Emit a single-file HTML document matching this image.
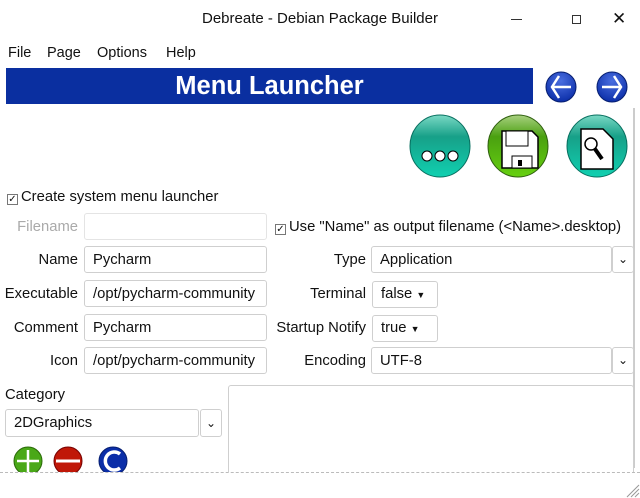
<!DOCTYPE html>
<html><head><style>
*{box-sizing:border-box;margin:0;padding:0}
body{width:640px;height:498px;background:#fff;font-family:"Liberation Sans","DejaVu Sans",sans-serif;font-size:14.8px;color:#111;position:relative;overflow:hidden}
.a{position:absolute;white-space:nowrap}
.in{position:absolute;border:1px solid #cfcfcf;border-radius:3px;background:#fff;padding-left:8px;line-height:26px;overflow:hidden}
.btn{position:absolute;border:1px solid #cfcfcf;border-radius:3px;background:#fff}
.lbl{position:absolute;text-align:right;white-space:nowrap}
.dd{position:absolute;border:1px solid #cfcfcf;border-radius:3px;background:#fff;padding-left:8px;line-height:25px}
.cb{display:inline-block;width:11px;height:11px;border:1px solid #777;vertical-align:-1px;margin-right:3px;font-size:10px;line-height:9px;text-align:center}
</style></head><body>
<div class="a" style="left:0;top:10px;width:640px;text-align:center;font-size:15px">Debreate - Debian Package Builder</div>
<div class="a" style="left:511px;top:19px;width:11px;height:1px;background:#333"></div>
<div class="a" style="left:572px;top:15px;width:9px;height:9px;border:1px solid #333"></div>
<div class="a" style="left:612px;top:9px;font-size:17px">✕</div>
<div class="a" style="left:8px;top:45px;font-size:14.5px">File</div>
<div class="a" style="left:47px;top:45px;font-size:14.5px">Page</div>
<div class="a" style="left:97px;top:45px;font-size:14.5px">Options</div>
<div class="a" style="left:166px;top:45px;font-size:14.5px">Help</div>
<div class="a" style="left:6px;top:68px;width:527px;height:36px;background:#0a2fa0;color:#fff;font-weight:bold;font-size:25.5px;text-align:center;line-height:36px">Menu Launcher</div>
<svg class="a" style="left:540px;top:66px" width="100" height="44">
<defs><radialGradient id="bl" cx="50%" cy="30%" r="70%"><stop offset="0" stop-color="#4a6ee0"/><stop offset="1" stop-color="#0b2ea8"/></radialGradient></defs>
<circle cx="21" cy="21" r="15" fill="url(#bl)" stroke="#061e70"/>
<path d="M31 21H13M19 10l-7 11 7 11" stroke="#fff" stroke-width="2.5" fill="none"/>
<circle cx="72" cy="21" r="15" fill="url(#bl)" stroke="#061e70"/>
<path d="M62 21h18M74 10l7 11-7 11" stroke="#fff" stroke-width="2.5" fill="none"/>
</svg>
<div class="a" style="left:633px;top:108px;width:2px;height:360px;background:#ccc"></div>
<svg class="a" style="left:405px;top:112px" width="230" height="70">
<defs><linearGradient id="tq" x1="0" y1="0" x2="0" y2="1"><stop offset="0" stop-color="#7ad8c4"/><stop offset=".35" stop-color="#17a088"/><stop offset="1" stop-color="#10d0b0"/></linearGradient>
<linearGradient id="gr" x1="0" y1="0" x2="0" y2="1"><stop offset="0" stop-color="#a8d080"/><stop offset=".35" stop-color="#4aa010"/><stop offset="1" stop-color="#66d010"/></linearGradient></defs>
<ellipse cx="35" cy="34" rx="30" ry="31" fill="url(#tq)" stroke="#087060"/>
<circle cx="22" cy="44" r="5" fill="#fff" stroke="#000"/><circle cx="35" cy="44" r="5" fill="#fff" stroke="#000"/><circle cx="48" cy="44" r="5" fill="#fff" stroke="#000"/>
<ellipse cx="113" cy="34" rx="30" ry="31" fill="url(#gr)" stroke="#306010"/>
<path d="M97 19h30l6 6v31H97z" fill="#fff" stroke="#000" stroke-width="1.5"/><rect x="101" y="19" width="22" height="15" fill="#fff" stroke="#000"/><rect x="107" y="44" width="20" height="12" fill="#fff" stroke="#000"/><rect x="113" y="48" width="4" height="6" fill="#000"/>
<ellipse cx="192" cy="34" rx="30" ry="31" fill="url(#tq)" stroke="#087060"/>
<path d="M176 17h22l10 10v30h-32z" fill="#fff" stroke="#000" stroke-width="1.5"/><circle cx="186" cy="32" r="6" fill="#fff" stroke="#000" stroke-width="1.5"/><path d="M190 37l7 10" stroke="#000" stroke-width="4"/>
</svg>
<div class="a" style="left:7px;top:189px"><span class="cb">✓</span>Create system menu launcher</div>
<div class="lbl" style="right:562px;top:219px;color:#aaa">Filename</div>
<div class="in" style="left:84px;top:213px;width:183px;height:27px;border-color:#e4e4e4"></div>
<div class="a" style="left:275px;top:219px"><span class="cb">✓</span>Use "Name" as output filename (&lt;Name&gt;.desktop)</div>
<div class="lbl" style="right:562px;top:252px">Name</div><div class="in" style="left:84px;top:246px;width:183px;height:27px">Pycharm</div>
<div class="lbl" style="right:562px;top:286px">Executable</div><div class="in" style="left:84px;top:280px;width:183px;height:27px">/opt/pycharm-community</div>
<div class="lbl" style="right:562px;top:320px">Comment</div><div class="in" style="left:84px;top:314px;width:183px;height:27px">Pycharm</div>
<div class="lbl" style="right:562px;top:353px">Icon</div><div class="in" style="left:84px;top:347px;width:183px;height:27px">/opt/pycharm-community</div>
<div class="lbl" style="right:274px;top:252px">Type</div><div class="in" style="left:371px;top:246px;width:241px;height:27px">Application</div>
<div class="btn" style="left:612px;top:246px;width:22px;height:27px;text-align:center;line-height:25px;font-size:12px">⌄</div>
<div class="lbl" style="right:274px;top:286px">Terminal</div><div class="dd" style="left:372px;top:281px;width:66px;height:27px">false <span style="font-size:9px">▼</span></div>
<div class="lbl" style="right:274px;top:320px">Startup Notify</div><div class="dd" style="left:372px;top:315px;width:66px;height:27px">true <span style="font-size:9px">▼</span></div>
<div class="lbl" style="right:274px;top:353px">Encoding</div><div class="in" style="left:371px;top:347px;width:241px;height:27px">UTF-8</div>
<div class="btn" style="left:612px;top:347px;width:22px;height:27px;text-align:center;line-height:25px;font-size:12px">⌄</div>
<div class="a" style="left:5px;top:387px">Category</div>
<div class="in" style="left:5px;top:409px;width:194px;height:28px;line-height:27px">2DGraphics</div>
<div class="btn" style="left:200px;top:409px;width:22px;height:28px;text-align:center;line-height:26px;font-size:12px">⌄</div>
<div class="a" style="left:228px;top:385px;width:406px;height:100px;border:1px solid #cfcfcf;border-radius:3px"></div>
<svg class="a" style="left:8px;top:444px" width="130" height="30">
<circle cx="20" cy="17" r="14" fill="#4aa818" stroke="#2a6a08"/><path d="M9 17h22M20 6v22" stroke="#fff" stroke-width="2.5"/>
<circle cx="60" cy="17" r="14" fill="#c01808" stroke="#700"/><path d="M48 17h24" stroke="#fff" stroke-width="3"/>
<circle cx="105" cy="17" r="14" fill="#0b2ea8" stroke="#061e70"/><path d="M112 10a9 9 0 1 0 0 14" stroke="#fff" stroke-width="3.5" fill="none"/>
</svg>
<div class="a" style="left:0;top:472px;width:640px;height:26px;background:#fff;border-top:1px dashed #bbb"></div>
<svg class="a" style="left:624px;top:482px" width="16" height="16"><path d="M15 3L3 15M15 7L7 15M15 11L11 15" stroke="#999"/></svg>
</body></html>
